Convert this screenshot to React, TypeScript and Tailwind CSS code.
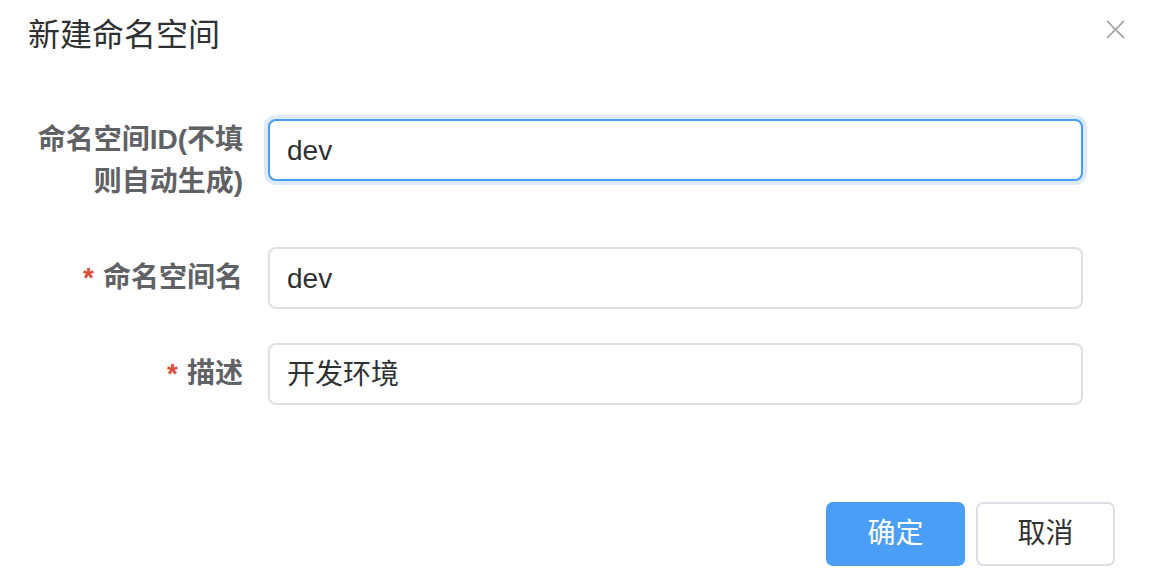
export default function App() {
  return (
    <div
      className="relative flex h-[582px] w-[1150px] flex-col bg-white"
      style={{ fontFamily: '"Liberation Sans", "Noto Sans CJK SC", sans-serif' }}
    >
      {/* header */}
      <div className="flex h-[70px] items-start justify-between pl-[28px] pr-[25px] pt-[19px]">
        <h2 className="text-[32px] leading-[32px] font-normal text-[#303133]">
          新建命名空间
        </h2>
        <button className="mt-[1px] text-[#999]">
          <svg width="19" height="19" viewBox="0 0 19 19">
            <path
              d="M1 1 L18 18 M18 1 L1 18"
              stroke="currentColor"
              strokeWidth="1.6"
              fill="none"
            />
          </svg>
        </button>
      </div>

      {/* form */}
      <div className="mt-[49px] flex flex-col pl-[28px]">
        <FormRow label={<>命名空间ID(不填<br />则自动生成)</>} multiline>
          <Field value="dev" focused />
        </FormRow>
        <div className="mt-[44px]">
          <FormRow label="命名空间名" required>
            <Field value="dev" />
          </FormRow>
        </div>
        <div className="mt-[34px]">
          <FormRow label="描述" required>
            <Field value="开发环境" />
          </FormRow>
        </div>
      </div>

      {/* footer */}
      <div className="mt-[97px] flex justify-end gap-[11px] pr-[35px]">
        <button className="h-[64px] w-[139px] rounded-[7px] bg-[#4a9ef5] text-[28px] text-white">
          确定
        </button>
        <button className="h-[64px] w-[139px] rounded-[7px] border-2 border-[#dcdfe6] bg-white text-[28px] text-[#333]">
          取消
        </button>
      </div>
    </div>
  );
}

function FormRow({
  label,
  required,
  multiline,
  children,
}: {
  label: React.ReactNode;
  required?: boolean;
  multiline?: boolean;
  children: React.ReactNode;
}) {
  return (
    <div className="flex items-start">
      <label
        className={`w-[215px] shrink-0 text-right text-[28px] font-bold text-[#606266] ${
          multiline ? "leading-[42px]" : "leading-[62px]"
        }`}
      >
        {required && <span className="mr-[9px] text-[#dd4b39]">*</span>}
        {label}
      </label>
      <div className="ml-[25px]">{children}</div>
    </div>
  );
}

function Field({ value, focused }: { value: string; focused?: boolean }) {
  return (
    <div
      className={`flex h-[62px] w-[815px] items-center rounded-[8px] border-2 bg-white px-[17px] pt-[2px] text-[28px] text-[#303133] ${
        focused
          ? "border-[#4a9df6] shadow-[0_0_0_4px_#dceafc]"
          : "border-[#dcdfe6]"
      }`}
    >
      {value}
    </div>
  );
}
